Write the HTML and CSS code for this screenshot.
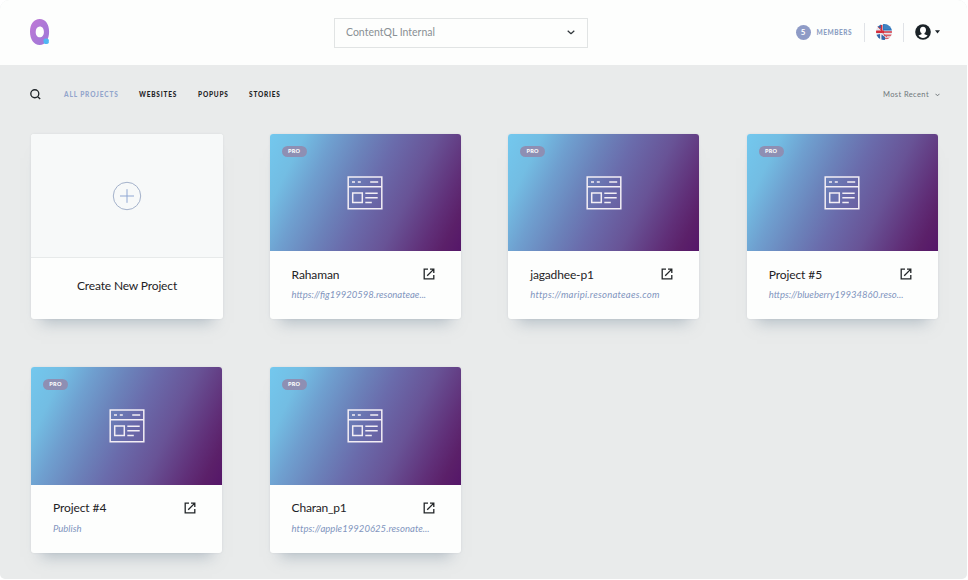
FILE: index.html
```html
<!DOCTYPE html>
<html lang="en">
<head>
<meta charset="utf-8">
<title>Projects</title>
<link rel="stylesheet" href="styles.css">
</head>
<body>
<svg class="defs" width="0" height="0" aria-hidden="true">
  <symbol id="browser" viewBox="0 0 36 34">
    <g fill="none" stroke="#f3eef5" stroke-width="1.5">
      <path d="M1.2 1h33.6v31.8H1.2zM1.2 10.7h33.6M5.7 17h9.6v9.6H5.7z"/>
      <path d="M5 6h3M10.8 6h3M23.2 6h8M18.3 17.2h12.4M18.3 21.7h12.4M18.3 26.4h6.5"/>
    </g>
  </symbol>
  <symbol id="open" viewBox="0 0 12 12">
    <path d="M5 1.2H1.2v9.6h9.6V7M7 1.2h3.8V5M10.6 1.4 4.2 7.8" fill="none" stroke="#222628" stroke-width="1.3"/>
  </symbol>
</svg>
<div class="app">
  <header class="topbar">
    <svg class="logo" viewBox="0 0 20 27" aria-hidden="true">
      <defs><linearGradient id="lg" x1="0" y1="0" x2="1" y2="1"><stop offset="0" stop-color="#c078d6"/><stop offset="1" stop-color="#9b78d8"/></linearGradient></defs>
      <path fill="url(#lg)" fill-rule="evenodd" d="M9.700 0c5.800 0 9.400 5.200 9.400 12.800S15.500 26 9.700 26 0 20.500 0 12.800 3.900 0 9.700 0zM9.800 7.600c-2.500 0-4.100 2.200-4.100 5.300s1.600 5.400 4.100 5.400 4.100-2.300 4.100-5.400-1.600-5.300-4.100-5.300z"/>
      <rect x="13.600" y="19.500" width="5.200" height="5.500" rx="1.800" fill="#4fb7f3"/>
    </svg>
    <div class="select">
      <span>ContentQL Internal</span>
      <svg width="8" height="5" viewBox="0 0 8 5"><path d="M.7.700 4 3.700 7.300.700" fill="none" stroke="#30363a" stroke-width="1.200" stroke-linejoin="round"/></svg>
    </div>
    <div class="account">
      <span class="count">5</span>
      <span class="members">MEMBERS</span>
      <span class="flag-cell">
        <svg width="16" height="16" viewBox="0 0 16 16">
          <defs><clipPath id="fc"><circle cx="8" cy="8" r="8"/></clipPath></defs>
          <g clip-path="url(#fc)">
            <path fill="#e4e5ed" d="M0 0h16v16H0z"/>
            <path fill="#2f78bd" d="M7 0h9v6.500H7z"/>
            <path fill="#d9606a" d="M7.500 7H16v2H7.500zM8 10.500h8v1.800H8zM8 13.800h7V15H8z"/>
            <path fill="#3567a8" d="M0 0h5v5L1.500 3zM0 11l4-1v6H0zM5.500 10.500 9 13v3H5.500z"/>
            <path fill="#d52d3b" d="M0 6.600h8v2.500H0zM4.800 1h1.600v8H4.800z"/>
            <path d="m6.500 9 4.500 4M1 2l4 4" stroke="#d9555c"/>
            <path d="M8.500 2h6M8.500 4h6" stroke="#9fc4e4" stroke-width=".6" stroke-dasharray="1 1"/>
          </g>
        </svg>
      </span>
      <svg class="avatar" width="16" height="16" viewBox="0 0 16 16">
        <circle cx="8" cy="8" r="7.800" fill="#1b2328"/>
        <path fill="#fff" d="M8 2.700c2 0 3 1.400 3 3.200 0 1.500-.6 2.600-1.500 3.200v1.200l3.100 1.300c-1.100 1.600-2.700 2.400-4.600 2.400s-3.500-.8-4.600-2.400l3.100-1.300V9.100C5.600 8.500 5 7.400 5 5.900c0-1.800 1-3.200 3-3.200z"/>
      </svg>
      <svg class="caret" width="5" height="4" viewBox="0 0 5 4"><path d="M0 .3h5L2.500 3.600z" fill="#1b2328"/></svg>
    </div>
  </header>
  <nav class="filters">
    <svg class="search" width="11" height="11" viewBox="0 0 11 11"><path d="M8.800 4.700a4 4 0 1 1-8 0 4 4 0 0 1 8 0zM7.500 7.500l2.700 2.500" fill="none" stroke="#20262a" stroke-width="1.350"/></svg>
    <a class="tab tab-all">ALL PROJECTS</a>
    <a class="tab tab-web">WEBSITES</a>
    <a class="tab tab-pop">POPUPS</a>
    <a class="tab tab-story">STORIES</a>
    <span class="sort">Most Recent</span>
    <svg width="5" height="4" viewBox="0 0 5 4"><path d="M.5.800 2.500 2.800 4.500.800" fill="none" stroke="#70777b"/></svg>
  </nav>
  <main class="grid">
    <article class="card create">
      <div class="blank"><svg width="30" height="30" viewBox="0 0 30 30"><g fill="none" stroke="#a3b1ca"><circle cx="15" cy="15" r="13.700"/><path d="M15 8.200v13.600M8 15h14" stroke="#8fa7d3"/></g></svg></div>
      <div class="create-label">Create New Project</div>
    </article>
    <article class="card">
      <div class="cover"><span class="pro">PRO</span><svg class="site"><use href="#browser"/></svg></div>
      <div class="info"><div class="row"><h2>Rahaman</h2><svg class="open"><use href="#open"/></svg></div><p class="url-a">https://fig19920598.resonateae...</p></div>
    </article>
    <article class="card">
      <div class="cover"><span class="pro">PRO</span><svg class="site"><use href="#browser"/></svg></div>
      <div class="info"><div class="row"><h2 class="name-b">jagadhee-p1</h2><svg class="open"><use href="#open"/></svg></div><p class="url-b">https://maripi.resonateaes.com</p></div>
    </article>
    <article class="card">
      <div class="cover"><span class="pro">PRO</span><svg class="site"><use href="#browser"/></svg></div>
      <div class="info"><div class="row"><h2>Project #5</h2><svg class="open"><use href="#open"/></svg></div><p class="url-c">https://blueberry19934860.reso...</p></div>
    </article>
    <article class="card">
      <div class="cover"><span class="pro">PRO</span><svg class="site"><use href="#browser"/></svg></div>
      <div class="info"><div class="row"><h2>Project #4</h2><svg class="open"><use href="#open"/></svg></div><p>Publish</p></div>
    </article>
    <article class="card">
      <div class="cover"><span class="pro">PRO</span><svg class="site"><use href="#browser"/></svg></div>
      <div class="info"><div class="row"><h2 class="name-d">Charan_p1</h2><svg class="open"><use href="#open"/></svg></div><p class="url-d">https://apple19920625.resonate...</p></div>
    </article>
  </main>
</div>
</body>
</html>
```
FILE: styles.css
```css
* { box-sizing: border-box; }
body { margin: 0; background: #fff; font-family: Lato, "Liberation Sans", sans-serif; color: #1d2225; }
svg { display: block; flex: none; }
.defs { position: absolute; }
.app { width: 967px; height: 579px; background: #e9ebeb; border-radius: 9px 9px 5px 5px; overflow: hidden; }
.topbar { height: 65px; background: #fdfefd; display: grid; grid-template-columns: 304px 254px 1fr; align-items: center; padding: 0 27px 0 30px; }
.logo { width: 20px; height: 27px; }
.select { height: 30px; border: 1px solid #e1e4e4; display: flex; align-items: center; justify-content: space-between; padding: 0 12px 1px 11px; font-size: 10.500px; color: #899094; }
.account { display: flex; align-items: center; justify-content: flex-end; padding-bottom: 1px; }
.count { width: 15px; height: 15px; border-radius: 50%; background: #8e9bc6; color: #fff; font-size: 8px; font-weight: 700; line-height: 15px; text-align: center; }
.members { margin: 0 12px 0 6px; font-size: 6.500px; font-weight: 900; letter-spacing: .5px; color: #8c9fc3; }
.flag-cell { height: 19px; width: 40px; border: solid #e0e3e7; border-width: 0 1px; display: flex; align-items: center; justify-content: center; }
.avatar { margin: 0 4px 0 11px; }
.filters { height: 69px; padding: 0 27px 10px 30px; display: flex; align-items: center; }
.search { margin-right: 23px; }
.tab { font-size: 6.500px; font-weight: 900; letter-spacing: .8px; white-space: nowrap; }
.tab-all { width: 75px; color: #92a5cc; letter-spacing: .87px; }
.tab-web { width: 59px; }
.tab-pop { width: 51px; }
.sort { margin: 0 6px 0 auto; font-size: 7.500px; letter-spacing: .4px; color: #70777b; }
.grid { display: grid; grid-template-columns: repeat(4, 191.200px); grid-auto-rows: 185.400px; gap: 48px 47.400px; padding: 0 0 0 31px; }
.card { background: #fdfefd; border-radius: 3px; box-shadow: 0 14px 14px -10px rgba(130, 147, 161, .5), 0 0 2px rgba(110, 120, 130, .15); }
.create { margin-right: -.800px; }
.blank { height: 124px; background: #f7f9f9; border-bottom: 1px solid #e7eaea; border-radius: 3px 3px 0 0; display: flex; align-items: center; justify-content: center; }
.create-label { height: 54px; display: flex; align-items: center; justify-content: center; font-size: 12px; letter-spacing: -.15px; }
.cover { height: 117.300px; border-radius: 3px 3px 0 0; background: linear-gradient(116deg, #73c8ee 0%, #73bde3 14%, #6f9fcf 26%, #6b82ba 40%, #6a6bab 52%, #685396 68%, #602f78 84%, #5b2069 92%, #551669 100%); position: relative; display: flex; align-items: center; justify-content: center; }
.pro { position: absolute; left: 12px; top: 12px; width: 25px; height: 11px; border-radius: 6px; background: #8e8fb3; color: #fff; font-size: 5.500px; font-weight: 900; line-height: 11px; letter-spacing: .3px; text-align: center; }
.site { width: 36px; height: 34px; }
.info { padding: 15px 26px 0 22px; }
.row { display: flex; align-items: center; justify-content: space-between; height: 16px; }
h2 { margin: 0; font-size: 12px; font-weight: 400; letter-spacing: -.1px; }
.name-b { letter-spacing: -.15px; }
.name-d { letter-spacing: -.2px; }
.open { width: 12px; height: 12px; }
p { margin: 6px 0 0; font-size: 9.500px; line-height: 14px; font-style: italic; color: #8195bd; white-space: nowrap; }
.url-b { letter-spacing: .25px; }
.url-d { letter-spacing: .04px; }
```
